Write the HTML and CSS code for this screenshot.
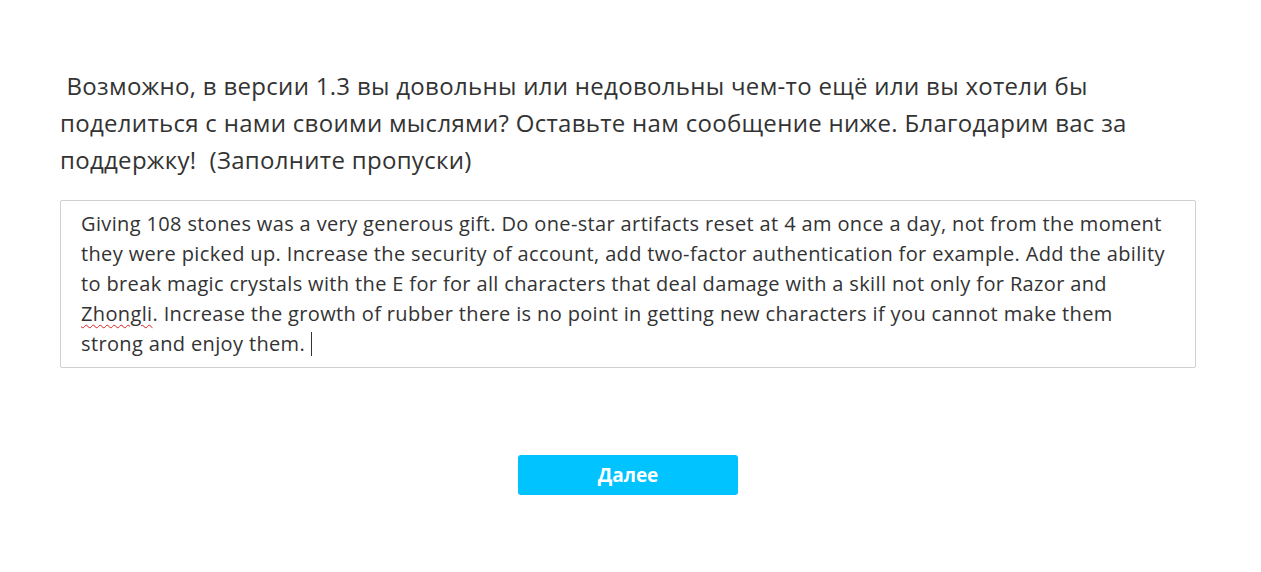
FILE: index.html
```html
<!DOCTYPE html>
<html lang="ru">
<head>
<meta charset="utf-8">
<link rel="stylesheet" href="styles.css">
</head>
<body>
<main class="page">
  <p class="question">&nbsp;Возможно, в версии 1.3 вы довольны или недовольны чем-то ещё или вы хотели бы поделиться с нами своими мыслями? Оставьте нам сообщение ниже. Благодарим вас за поддержку!&nbsp; (Заполните пропуски)</p>
  <div class="answer">Giving 108 stones was a very generous gift. Do one-star artifacts reset at 4 am once a day, not from the moment they were picked up. Increase the security of account, add two-factor authentication for example. Add the ability to break magic crystals with the E for for all characters that deal damage with a skill not only for Razor and <span class="misspelled">Zhongli</span>. Increase the growth of rubber there is no point in getting new characters if you cannot make them strong and enjoy them. <span class="caret"></span></div>
  <div class="actions">
    <button class="next">Далее</button>
  </div>
</main>
</body>
</html>
```

FILE: styles.css
```css
html, body {
  margin: 0;
  padding: 0;
  background: #fff;
}
body {
  font-family: "Open Sans", "Noto Sans", sans-serif;
  color: #333;
}
.page {
  width: 1136px;
  margin: 0 0 0 60px;
  padding-top: 67px;
}
.question {
  margin: 0;
  font-size: 24px;
  letter-spacing: 0.3px;
  line-height: 37px;
  color: #333;
}
.answer {
  margin-top: 22px;
  box-sizing: border-box;
  height: 168px;
  border: 1px solid #d0d0d0;
  border-radius: 2px;
  padding: 8px 20px 0 20px;
  font-size: 20px;
  letter-spacing: 0.36px;
  line-height: 30px;
  color: #333;
}
.misspelled {
  text-decoration: underline wavy #e02020;
  text-decoration-thickness: 1px;
  text-underline-offset: 3px;
}
.caret {
  display: inline-block;
  width: 1px;
  height: 24px;
  background: #333;
  vertical-align: -5px;
}
.actions {
  display: flex;
  justify-content: center;
  padding-top: 87px;
}
.next {
  width: 220px;
  height: 40px;
  border: none;
  border-radius: 3px;
  background: #00c3ff;
  color: #fff;
  font-family: "Open Sans", "Noto Sans", sans-serif;
  font-weight: 700;
  font-size: 19px;
  cursor: pointer;
  padding: 0;
}
```
